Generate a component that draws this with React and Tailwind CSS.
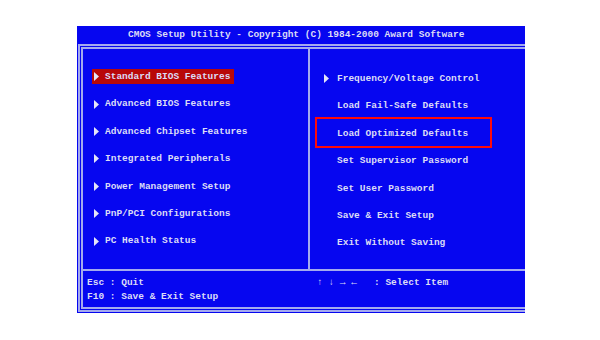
const LEFT = [
  'Standard BIOS Features',
  'Advanced BIOS Features',
  'Advanced Chipset Features',
  'Integrated Peripherals',
  'Power Management Setup',
  'PnP/PCI Configurations',
  'PC Health Status',
];

const RIGHT = [
  { label: 'Frequency/Voltage Control', arrow: true },
  { label: 'Load Fail-Safe Defaults' },
  { label: 'Load Optimized Defaults', boxed: true },
  { label: 'Set Supervisor Password' },
  { label: 'Set User Password' },
  { label: 'Save & Exit Setup' },
  { label: 'Exit Without Saving' },
];

function Arrow() {
  return (
    <svg width="5" height="9" viewBox="0 0 5 9" className="shrink-0">
      <path d="M0 0 L5 4.5 L0 9 Z" fill="#e4e4f8" />
    </svg>
  );
}

export default function App() {
  return (
    <div className="w-[600px] h-[340px] bg-white pt-[26px] pl-[77px] overflow-hidden">
      <div
        className="w-[448px] h-[287px] bg-[#0606f0] text-[#dcdcf6] font-bold text-[9.5px] leading-none"
        style={{ fontFamily: '"Liberation Mono", "DejaVu Sans Mono", monospace' }}
      >
        {/* title bar */}
        <div className="h-[18px] flex items-center pl-[51px] whitespace-pre">
          CMOS Setup Utility - Copyright (C) 1984-2000 Award Software
        </div>

        {/* framed body */}
        <div className="ml-[1px] h-[268px] border-[5px] border-r-0 border-double border-[#a4aaee] flex flex-col">
          <div className="h-[220px] flex">
            {/* left menu */}
            <div className="w-[227px] pt-[14px] pl-[9px] border-r-2 border-[#a4aaee] flex flex-col">
              {LEFT.map((item, i) => (
                <div key={item} className="h-[27.4px] flex items-center">
                  <div
                    className={`h-[15px] flex items-center gap-[6px] pl-[2px] pr-[4px] ${
                      i === 0 ? 'bg-[#b80808]' : ''
                    }`}
                  >
                    <Arrow />
                    <span className="whitespace-pre">{item}</span>
                  </div>
                </div>
              ))}
            </div>

            {/* right menu */}
            <div className="flex-1 pt-[16px] pl-[14px] flex flex-col">
              {RIGHT.map((item) => (
                <div key={item.label} className="relative h-[27.4px] flex items-center">
                  <div className="w-[5px] shrink-0">{item.arrow && <Arrow />}</div>
                  <span className="ml-[8px] whitespace-pre">{item.label}</span>
                  {item.boxed && (
                    <div className="absolute left-[-9px] top-[-3px] w-[177px] h-[31px] border-2 border-[#ff0a0a]" />
                  )}
                </div>
              ))}
            </div>
          </div>

          {/* key help */}
          <div className="flex-1 border-t-2 border-[#a4aaee] flex pt-[5px] leading-[14px]">
            <div className="w-[229px] pl-[4px]">
              <div className="whitespace-pre">Esc : Quit</div>
              <div className="whitespace-pre">F10 : Save &amp; Exit Setup</div>
            </div>
            <div className="whitespace-pre pl-[5px]">{'\u2191 \u2193 \u2192 \u2190   : Select Item'}</div>
          </div>
        </div>
      </div>
    </div>
  );
}
